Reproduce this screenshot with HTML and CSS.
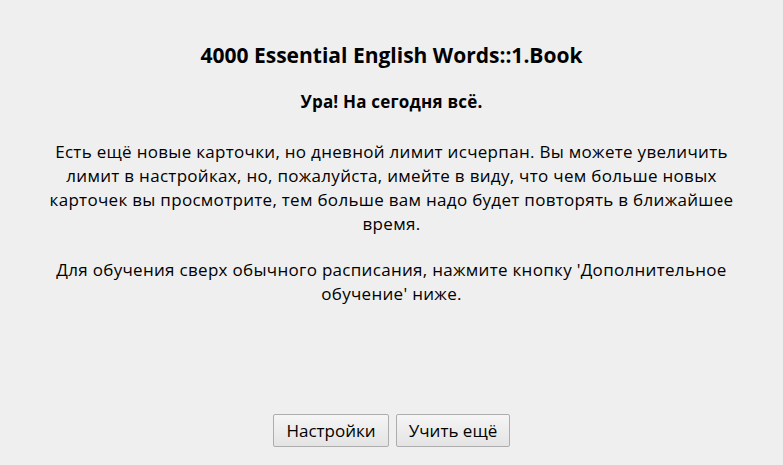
FILE: index.html
```html
<!DOCTYPE html>
<html lang="ru">
<head>
<meta charset="utf-8">
<link rel="stylesheet" href="styles.css">
</head>
<body>
<div class="page">
  <main class="congrats">
    <h1 class="title">4000 Essential English Words::1.Book</h1>
    <p class="subtitle">Ура! На сегодня всё.</p>
    <p class="text">Есть ещё новые карточки, но дневной лимит исчерпан. Вы можете увеличить лимит в настройках, но, пожалуйста, имейте в виду, что чем больше новых карточек вы просмотрите, тем больше вам надо будет повторять в ближайшее время.</p>
    <p class="text">Для обучения сверх обычного расписания, нажмите кнопку 'Дополнительное обучение' ниже.</p>
  </main>
  <div class="buttons">
    <button class="btn btn-options">Настройки</button>
    <button class="btn btn-more">Учить ещё</button>
  </div>
</div>
</body>
</html>
```
FILE: styles.css
```css
html, body {
  margin: 0;
  padding: 0;
  height: 100%;
  background: #efefef;
}
body {
  font-family: "Open Sans", "Noto Sans", sans-serif;
  color: #000;
}
.page {
  height: 465px;
  display: flex;
  flex-direction: column;
  align-items: center;
}
.congrats {
  width: 700px;
  text-align: center;
  padding-top: 40px;
  flex: 1;
}
.title {
  margin: 0;
  font-size: 21px;
  font-weight: 700;
  line-height: 30px;
}
.subtitle {
  margin: 20px 0 0;
  font-size: 17px;
  font-weight: 700;
  line-height: 24px;
  letter-spacing: 0.2px;
}
.text {
  margin: 26px 0 0;
  font-size: 17px;
  line-height: 24px;
  letter-spacing: 0.3px;
}
.text + .text {
  margin-top: 22px;
}
.buttons {
  display: flex;
  gap: 7px;
  padding-bottom: 18px;
}
.btn {
  font-family: inherit;
  font-size: 17px;
  color: #000;
  height: 33px;
  padding: 0;
  border: 1px solid #adadad;
  border-radius: 2px;
  background: linear-gradient(#f5f5f5, #e4e4e4);
}
.btn-options { width: 116px; }
.btn-more { width: 114px; }
```
